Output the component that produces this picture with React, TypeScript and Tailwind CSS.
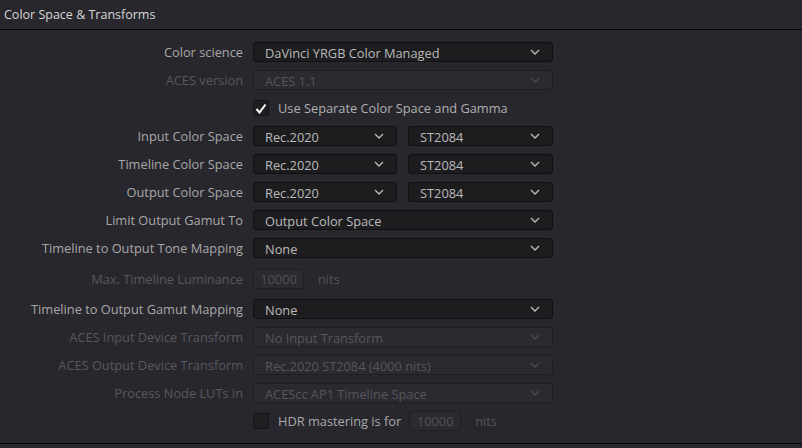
import React from 'react';

const font = { fontFamily: '"Open Sans", "Noto Sans", sans-serif' };

const Chevron = ({ dim }: { dim?: boolean }) => (
  <svg width="10" height="6" viewBox="0 0 10 6" className={dim ? 'text-[#4a4a4f]' : 'text-[#bdbdbd]'}>
    <polyline points="1,1 5,5 9,1" fill="none" stroke="currentColor" strokeWidth="1.3" />
  </svg>
);

const Select = ({ value, disabled, className = '' }: { value: string; disabled?: boolean; className?: string }) => (
  <div
    className={`flex h-[20px] items-center justify-between rounded-[3px] border pl-[11px] pr-[12px] ${
      disabled
        ? 'border-[#1f1f23] bg-[#2b2a30] text-[#56565b]'
        : 'border-[#111113] bg-[#1d1d20] text-[#bababa]'
    } ${className}`}
  >
    <span className="pt-[2px] leading-none">{value}</span>
    <Chevron dim={disabled} />
  </div>
);

const Check = ({ checked }: { checked?: boolean }) => (
  <div className="flex h-[16px] w-[16px] items-center justify-center rounded-[2px] border border-[#141416] bg-[#1f1f22]">
    {checked && (
      <svg width="12" height="11" viewBox="0 0 12 11">
        <polyline points="1.5,6 4.5,9.5 10.5,1.5" fill="none" stroke="#ffffff" strokeWidth="2" />
      </svg>
    )}
  </div>
);

const Row = ({
  label,
  dim,
  children,
  h = 'h-[28px]',
}: {
  label?: string;
  dim?: boolean;
  children: React.ReactNode;
  h?: string;
}) => (
  <div className={`flex ${h} items-center gap-[10px]`}>
    <div className={`w-[243px] pt-[2px] text-right ${dim ? 'text-[#58585d]' : 'text-[#a8a8a8]'}`}>{label}</div>
    <div className="flex w-[300px] items-center">{children}</div>
  </div>
);

const NumBox = ({ value, className = '' }: { value: string; className?: string }) => (
  <div
    className={`flex h-[20px] items-center justify-center rounded-[3px] border border-[#1f1f23] bg-[#2b2a30] pt-[2px] text-[#515156] ${className}`}
  >
    {value}
  </div>
);

export default function App() {
  return (
    <div className="h-[448px] w-[802px] bg-[#28272d] text-[12.8px]" style={font}>
      <div className="flex h-[29px] items-center pl-[4px] pt-[1px] text-[12.5px] text-[#d6d6d6]">
        Color Space &amp; Transforms
      </div>
      <div className="border-t border-[#050506]" />
      <div className="border-b border-[#050506] pb-[8px] pt-[8px]">
        <Row label="Color science">
          <Select value="DaVinci YRGB Color Managed" className="w-full" />
        </Row>
        <Row label="ACES version" dim>
          <Select value="ACES 1.1" disabled className="w-full" />
        </Row>
        <Row>
          <Check checked />
          <span className="ml-[9px] pt-[2px] text-[#b0b0b0]">Use Separate Color Space and Gamma</span>
        </Row>
        {['Input Color Space', 'Timeline Color Space', 'Output Color Space'].map((l) => (
          <Row key={l} label={l}>
            <div className="flex w-full gap-[11px]">
              <Select value="Rec.2020" className="w-[144px]" />
              <Select value="ST2084" className="w-[145px]" />
            </div>
          </Row>
        ))}
        <Row label="Limit Output Gamut To">
          <Select value="Output Color Space" className="w-full" />
        </Row>
        <Row label="Timeline to Output Tone Mapping">
          <Select value="None" className="w-full" />
        </Row>
        <Row label="Max. Timeline Luminance" dim h="h-[33px]">
          <NumBox value="10000" className="w-[51px]" />
          <span className="ml-[14px] pt-[2px] text-[#55555a]">nits</span>
        </Row>
        <Row label="Timeline to Output Gamut Mapping">
          <Select value="None" className="w-full" />
        </Row>
        <Row label="ACES Input Device Transform" dim>
          <Select value="No Input Transform" disabled className="w-full" />
        </Row>
        <Row label="ACES Output Device Transform" dim>
          <Select value="Rec.2020 ST2084 (4000 nits)" disabled className="w-full" />
        </Row>
        <Row label="Process Node LUTs in" dim>
          <Select value="ACEScc AP1 Timeline Space" disabled className="w-full" />
        </Row>
        <Row>
          <Check />
          <span className="ml-[9px] pt-[2px] text-[#a9a9a9]">HDR mastering is for</span>
          <NumBox value="10000" className="ml-[8px] w-[52px]" />
          <span className="ml-[14px] pt-[2px] text-[#55555a]">nits</span>
        </Row>
      </div>
    </div>
  );
}
